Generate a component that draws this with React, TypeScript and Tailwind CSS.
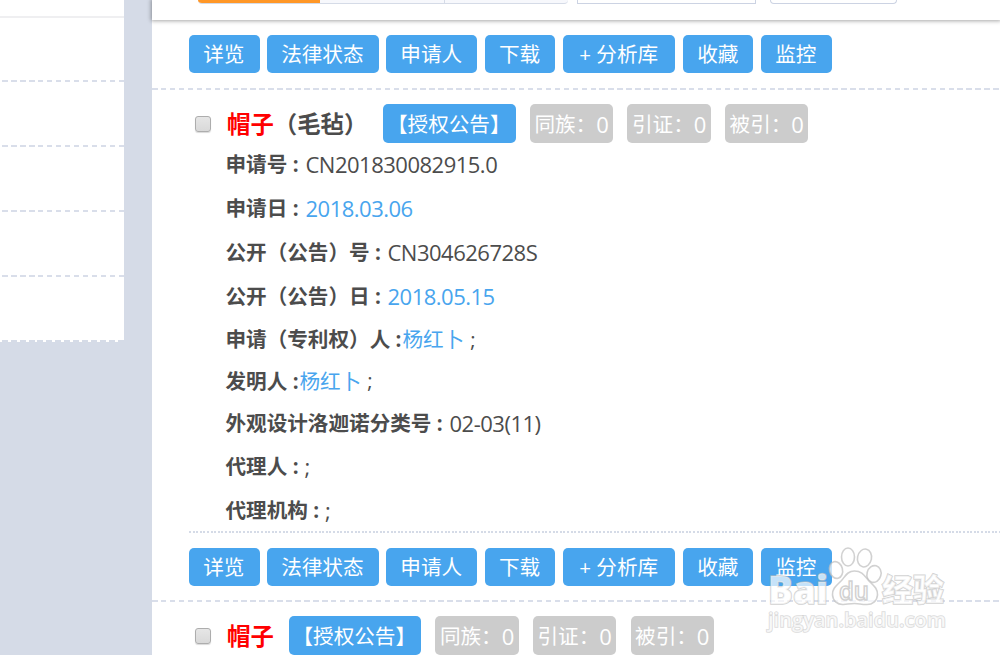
import { clsx } from 'clsx';

interface Field {
  label: string;
  value: string;
  link?: boolean;
  suffix?: string;
  labelWidth: string;
  height: string;
}

const actions = [
  { label: '详览', width: 'w-[70.5px]' },
  { label: '法律状态', width: 'w-[111.5px]' },
  { label: '申请人', width: 'w-[91px]' },
  { label: '下载', width: 'w-[70.5px]' },
  { label: '+ 分析库', width: 'w-[112.5px]' },
  { label: '收藏', width: 'w-[70.5px]' },
  { label: '监控', width: 'w-[70.5px]' },
];

const fields: Field[] = [
  { label: '申请号 :', value: 'CN201830082915.0', labelWidth: 'w-[80px]', height: 'h-[44px]' },
  { label: '申请日 :', value: '2018.03.06', link: true, labelWidth: 'w-[80px]', height: 'h-[44px]' },
  { label: '公开（公告）号 :', value: 'CN304626728S', labelWidth: 'w-[162px]', height: 'h-[44px]' },
  { label: '公开（公告）日 :', value: '2018.05.15', link: true, labelWidth: 'w-[162px]', height: 'h-[44px]' },
  { label: '申请（专利权）人 :', value: '杨红卜', link: true, suffix: ';', labelWidth: 'w-[177px]', height: 'h-[42px]' },
  { label: '发明人 :', value: '杨红卜', link: true, suffix: ';', labelWidth: 'w-[74px]', height: 'h-[41px]' },
  { label: '外观设计洛迦诺分类号 :', value: '02-03(11)', labelWidth: 'w-[224px]', height: 'h-[43px]' },
  { label: '代理人 :', value: ';', labelWidth: 'w-[79px]', height: 'h-[44px]' },
  { label: '代理机构 :', value: ';', labelWidth: 'w-[99.5px]', height: 'h-[44px]' },
];

const counters = ['同族：', '引证：', '被引：'];

function DashedLine({ fromRight = false }: { fromRight?: boolean }) {
  return (
    <div
      className={clsx(
        'h-[2px] w-full shrink-0',
        fromRight
          ? 'bg-[repeating-linear-gradient(270deg,#d9deea_0_5.5px,transparent_5.5px_8.95px)]'
          : 'bg-[repeating-linear-gradient(90deg,#d9deea_0_5.5px,transparent_5.5px_8.95px)]',
      )}
    />
  );
}

function Sidebar() {
  return (
    <aside className="w-[124px] shrink-0">
      <div className="h-[16px] bg-white" />
      <div className="h-[2px] bg-[#efeff1]" />
      <div className="flex h-[322px] flex-col bg-white">
        <div className="h-[62px]" />
        <DashedLine fromRight />
        <div className="h-[63px]" />
        <DashedLine fromRight />
        <div className="h-[63px]" />
        <DashedLine fromRight />
        <div className="h-[63px]" />
        <DashedLine fromRight />
      </div>
      <div className="h-[2px] bg-[repeating-linear-gradient(270deg,#d5dbe7_0_6px,#fff_6px_8.95px)]" />
    </aside>
  );
}

function Toolbar() {
  return (
    <header className="relative h-[20px] bg-white pl-[46px] shadow-[0_0_4px_1px_rgba(0,0,0,0.35)]">
      <div className="flex h-[4px] items-start">
        <div className="flex h-[4px] w-[370px] overflow-hidden rounded-b-[5px] border-b border-[#d5dbe7] bg-[#f7f8fc]">
          <div className="h-[3px] w-[122px] bg-[#ff9727]" />
          <div className="h-[3px] w-[125px] border-r border-[#d5dbe7]" />
        </div>
        <div className="ml-[9px] h-[4px] w-[179px] border-x border-b border-[#ccd3e3]" />
        <div className="ml-[14px] h-[4px] w-[127px] rounded-b-[5px] border-x border-b border-[#ccd3e3]" />
      </div>
    </header>
  );
}

function ActionBar() {
  return (
    <div className="flex h-[38px] gap-[7.6px] pl-[37px]">
      {actions.map((a) => (
        <button
          key={a.label}
          className={clsx(
            'flex h-[38px] shrink-0 items-center justify-center rounded-[5px] bg-[#48a5ee] pt-px pr-px whitespace-pre text-white',
            a.width,
          )}
        >
          {a.label}
        </button>
      ))}
    </div>
  );
}

function TitleRow({ note }: { note?: string }) {
  return (
    <div className="flex h-[39px] items-center pl-[43px]">
      <span className="mt-px h-[16px] w-[16px] shrink-0 rounded-[3px] border-[1.5px] border-[#adadad] bg-gradient-to-b from-[#e6e6e6] to-[#d9d9d9] shadow-[0_1px_1px_rgba(0,0,0,0.15)]" />
      <h2
        className={clsx(
          'ml-[16px] shrink-0 pt-[2px] text-[23.4px] font-bold whitespace-nowrap text-[#4c4c4c]',
          note ? 'w-[156px]' : 'w-[61.5px]',
        )}
      >
        <span className="text-[#ff0000]">帽子</span>
        {note}
      </h2>
      <span className="flex h-[39px] w-[132.5px] shrink-0 items-center justify-center rounded-[5px] bg-[#48a5ee] pt-px pr-px whitespace-nowrap text-white">
        【授权公告】
      </span>
      {counters.map((c) => (
        <span
          key={c}
          className="ml-[14.4px] flex h-[39px] w-[83.2px] shrink-0 items-center rounded-[5px] bg-[#cccccc] pt-px pl-[4.5px] whitespace-nowrap text-white"
        >
          {c}
          <span className="text-[22px]">0</span>
        </span>
      ))}
    </div>
  );
}

function FieldList() {
  return (
    <dl className="mt-[-1px] pl-[73.5px]">
      {fields.map((f) => (
        <div key={f.label} className={clsx('flex items-center whitespace-nowrap', f.height)}>
          <dt className={clsx('shrink-0 pt-px font-bold', f.labelWidth)}>{f.label}</dt>
          <dd
            className={clsx(
              f.link && 'text-[#48a5ee]',
              f.suffix ? 'pt-px' : 'text-[22px] tracking-[-0.5px]',
            )}
          >
            {f.value}
          </dd>
          {f.suffix && <span className="ml-[6px]">{f.suffix}</span>}
        </div>
      ))}
    </dl>
  );
}

function Watermark() {
  const outline = { stroke: '#bdbdbd', strokeOpacity: 0.7, strokeWidth: 1.6 };
  return (
    <svg
      className="pointer-events-none absolute top-[540px] left-[760px]"
      width="200"
      height="100"
      viewBox="0 0 200 100"
      fill="rgba(255,255,255,0.7)"
      fontFamily="'Open Sans', 'Noto Sans CJK SC', sans-serif"
    >
      <text x="8" y="63.5" fontSize="39" fontWeight="800" textLength="60" lengthAdjust="spacingAndGlyphs" paintOrder="stroke" {...outline}>
        Bai
      </text>
      {/* paw */}
      <g {...outline}>
        <ellipse cx="76" cy="30" rx="6.5" ry="8.5" transform="rotate(-15 76 30)" />
        <ellipse cx="88" cy="17" rx="6.5" ry="9" />
        <ellipse cx="104.5" cy="18" rx="7" ry="9" transform="rotate(12 104.5 18)" />
        <ellipse cx="114" cy="34" rx="7" ry="8.5" transform="rotate(15 114 34)" />
        <path d="M94.500 31c-7 0-9 5-13 9.500-5 5-9.500 8-9 14.500.5 6 5 10 11 9.500 5-.5 7-1 11-1s7 1 11.500 1c6.500.5 11-3.500 11.500-9.500.5-6.500-4-9.500-9-14.500-4-4.500-6-9.500-14-9.500z" />
      </g>
      <text x="79" y="60" fontSize="25" fontWeight="600" textLength="30" lengthAdjust="spacingAndGlyphs" {...outline}>
        du
      </text>
      <text x="122" y="61" fontSize="31" fontWeight="900" textLength="62" lengthAdjust="spacingAndGlyphs" paintOrder="stroke" {...outline}>
        经验
      </text>
      <text x="8" y="87" fontSize="20" fontWeight="600" textLength="178" lengthAdjust="spacingAndGlyphs" paintOrder="stroke" {...outline} strokeOpacity={0.55}>
        jingyan.baidu.com
      </text>
    </svg>
  );
}

export default function App() {
  return (
    <div className="relative flex h-[655px] w-[1000px] overflow-hidden bg-[#d5dbe7] font-['Open_Sans','Noto_Sans_CJK_SC',sans-serif] text-[20.6px] leading-none text-[#4c4c4c]">
      <Sidebar />
      <main className="ml-[28px] flex w-[848px] shrink-0 flex-col bg-white">
        <Toolbar />
        <div className="pt-[15px] pb-[15px]">
          <ActionBar />
        </div>
        <DashedLine />
        <div className="pt-[14px]">
          <TitleRow note="（毛毡）" />
        </div>
        <FieldList />
        <div className="mt-[-1px] ml-[37px] h-[2px] shrink-0 bg-[repeating-linear-gradient(90deg,#d5dbe7_0_2px,transparent_2px_3.6px)]" />
        <div className="pt-[15px] pb-[14px]">
          <ActionBar />
        </div>
        <DashedLine />
        <div className="pt-[14px]">
          <TitleRow />
        </div>
      </main>
      <Watermark />
    </div>
  );
}
